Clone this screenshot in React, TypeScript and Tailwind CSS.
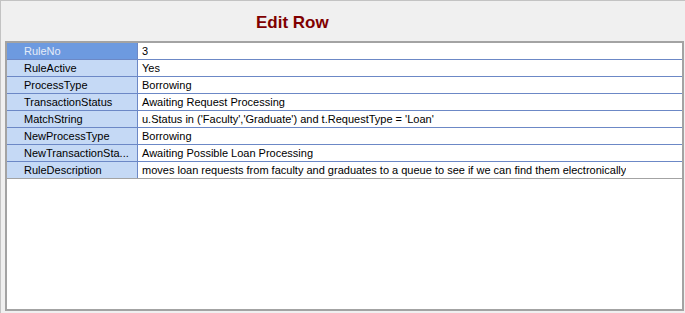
import React from "react";

const rows: [string, string][] = [
  ["RuleNo", "3"],
  ["RuleActive", "Yes"],
  ["ProcessType", "Borrowing"],
  ["TransactionStatus", "Awaiting Request Processing"],
  ["MatchString", "u.Status in ('Faculty','Graduate') and t.RequestType = 'Loan'"],
  ["NewProcessType", "Borrowing"],
  ["NewTransactionSta...", "Awaiting Possible Loan Processing"],
  ["RuleDescription", "moves loan requests from faculty and graduates to a queue to see if we can find them electronically"],
];

export default function App() {
  return (
    <div
      className="w-[685px] h-[313px] bg-[#f0f0f0] border-t border-l border-[#c3c3c3] overflow-hidden"
      style={{ fontFamily: '"Liberation Sans", Arial, sans-serif' }}
    >
      <div className="h-[40px] pl-[255px] pt-[10px]">
        <span className="text-[17px] leading-[20px] font-bold text-[#800000]">Edit Row</span>
      </div>
      <div className="ml-[4px] w-[679px] h-[270px] bg-white border-2 border-[#a3a3a3]">
        {rows.map(([k, v], i) => {
          const last = i === rows.length - 1;
          const sel = i === 0;
          return (
            <div
              key={k}
              className={`flex h-[17px] border-b ${last ? "border-[#a3a3a3]" : "border-[#6c88c6]"}`}
            >
              <div
                className={`w-[131px] shrink-0 border-r border-[#6c88c6] pl-[17px] text-[11px] leading-[16px] whitespace-nowrap overflow-hidden ${
                  sel ? "bg-[#6d9ae0] text-[#e4ecf8]" : "bg-[#c5d9f5] text-black"
                }`}
              >
                {k}
              </div>
              <div className="pl-[4px] text-[11px] leading-[16px] text-black whitespace-nowrap overflow-hidden">
                {v}
              </div>
            </div>
          );
        })}
      </div>
    </div>
  );
}
